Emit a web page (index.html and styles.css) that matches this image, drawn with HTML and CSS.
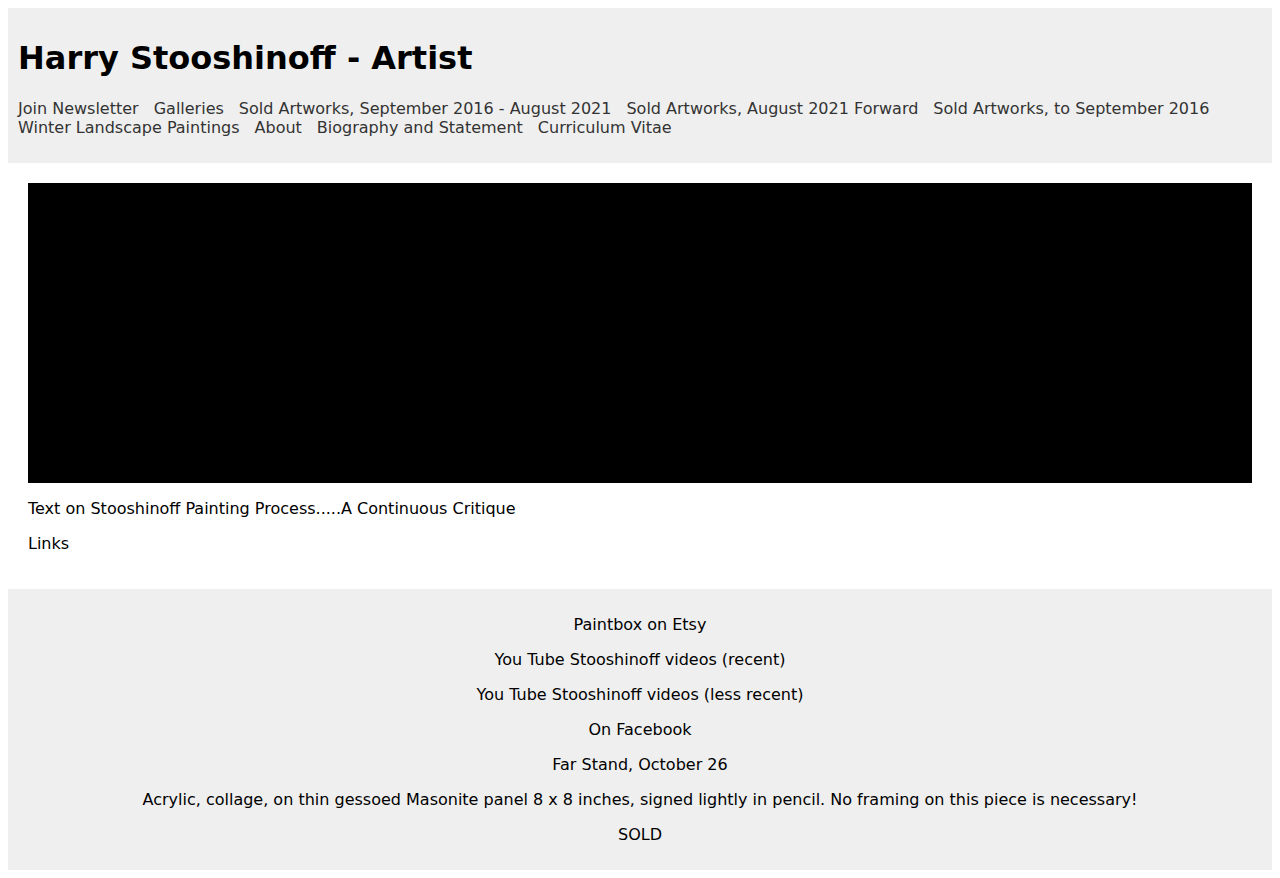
FILE: index.html
```html
<!DOCTYPE html>
<html>
<head>
<meta charset="utf-8">
<title>Harry Stooshinoff - Artist</title>
<link rel="stylesheet" href="styles.css">
</head>
<body>
<header class="site-header">
  <h1 class="site-title">Harry Stooshinoff - Artist</h1>
  <nav class="site-nav">
    <a href="#">Join Newsletter</a>
    <a href="#">Galleries</a>
    <a href="#">Sold Artworks, September 2016 - August 2021</a>
    <a href="#">Sold Artworks, August 2021 Forward</a>
    <a href="#">Sold Artworks, to September 2016</a>
    <a href="#">Winter Landscape Paintings</a>
    <a href="#">About</a>
    <a href="#">Biography and Statement</a>
    <a href="#">Curriculum Vitae</a>
  </nav>
</header>
<main class="content">
  <div class="video"></div>
  <p class="item">Text on Stooshinoff Painting Process.....A Continuous Critique</p>
  <p class="item">Links</p>
</main>
<footer class="site-footer">
  <p class="item">Paintbox on Etsy</p>
  <p class="item">You Tube Stooshinoff videos (recent)</p>
  <p class="item">You Tube Stooshinoff videos (less recent)</p>
  <p class="item">On Facebook</p>
  <p class="item">Far Stand, October 26</p>
  <p class="item">Acrylic, collage, on thin gessoed Masonite panel 8 x 8 inches, signed lightly in pencil. No framing on this piece is necessary!</p>
  <p class="item">SOLD</p>
</footer>
</body>
</html>
```

FILE: styles.css
```css
body {
  margin: 8px;
  font-family: "DejaVu Sans", sans-serif;
  color: #000;
  background: #fff;
}
.site-header {
  background: #efefef;
  padding: 10px 10px 26px;
}
.site-title {
  font-size: 32px;
  font-weight: bold;
  margin: 21px 0 22px;
}
.site-nav {
  display: flex;
  flex-wrap: wrap;
  column-gap: 15px;
  font-size: 16px;
  line-height: 19px;
}
.site-nav a {
  color: #333;
  text-decoration: none;
}
.content {
  padding: 20px;
}
.video {
  height: 300px;
  background: #000;
}
.item {
  font-size: 16px;
  line-height: 19px;
  margin: 16px 0;
}
.site-footer {
  background: #efefef;
  padding: 10px;
  text-align: center;
}
```
